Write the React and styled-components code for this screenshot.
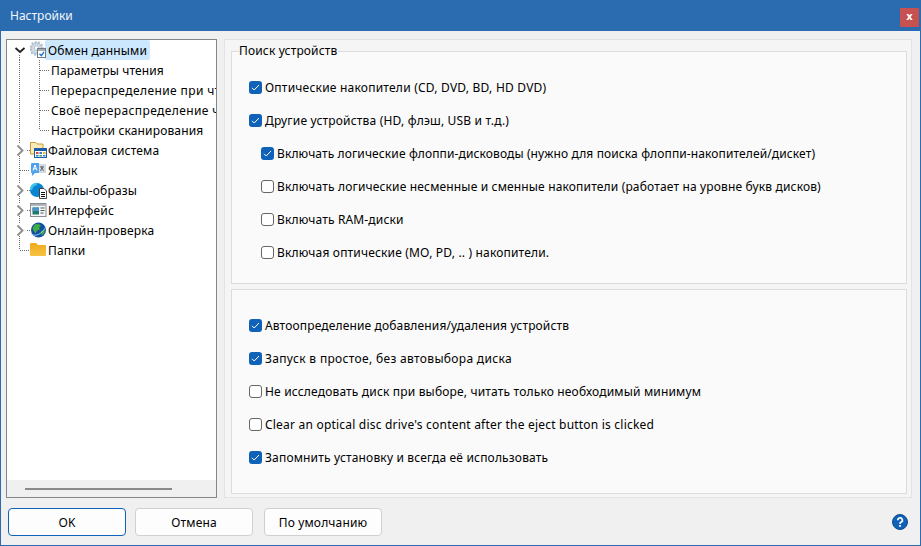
import styled, { createGlobalStyle } from "styled-components";

const GlobalStyle = createGlobalStyle`
  html, body {
    margin: 0;
    padding: 0;
    background: #f0f0f0;
  }
`;

const Window = styled.div`
  width: 921px;
  height: 546px;
  box-sizing: border-box;
  display: flex;
  flex-direction: column;
  background: #f0f0f0;
  border: 1px solid #2b6cb0;
  border-top: 0;
  font-family: "Noto Sans", "Open Sans", sans-serif;
  font-size: 12px;
  color: #000;
  overflow: hidden;
`;

const TitleBar = styled.div`
  height: 31px;
  flex: none;
  background: #2b6cb0;
  display: flex;
  align-items: center;
  justify-content: space-between;
  padding: 0 1px 0 9px;
  color: #f2f6fb;
`;

const CloseButton = styled.div`
  width: 19px;
  height: 19px;
  margin-top: 3px;
  background: #c75050;
  color: #fff;
  display: flex;
  align-items: center;
  justify-content: center;
  font-family: "DejaVu Sans", sans-serif;
  font-weight: 700;
  font-size: 10px;
  line-height: 1;
`;

const Body = styled.div`
  height: 467px;
  flex: none;
  box-sizing: border-box;
  display: flex;
  gap: 7px;
  padding: 8px 8px 0 5px;
`;

const TreePane = styled.div`
  width: 211px;
  height: 459px;
  box-sizing: border-box;
  flex: none;
  display: flex;
  flex-direction: column;
  background: #fff;
  border: 1px solid #82878c;
`;

const TreeList = styled.div`
  flex: 1;
  overflow: hidden;
  padding-left: 3px;
`;

const TreeRow = styled.div`
  height: 20px;
  display: flex;
  align-items: center;
  white-space: nowrap;
`;

const Guide = styled.svg`
  width: 20px;
  height: 20px;
  flex: none;
  display: block;
`;

const NodeIcon = styled.svg`
  width: 18px;
  height: 18px;
  flex: none;
  margin-right: -3px;
  position: relative;
  z-index: 1;
`;

const Label = styled.span`
  height: 20px;
  line-height: 21px;
  padding: 0 3px;
  border-radius: 2px;
  letter-spacing: ${(p) => p.$spacing || "0.15px"};
  background: ${(p) => (p.$selected ? "#cce8ff" : "transparent")};
`;

const ChildLabel = styled(Label)`
  padding-left: 1px;
`;

const HScroll = styled.div`
  height: 17px;
  flex: none;
  background: #f0f0f0;
  display: flex;
  align-items: center;
  padding-left: 18px;
`;

const HThumb = styled.div`
  width: 147px;
  height: 2px;
  background: #8a8a8a;
`;

const SettingsPane = styled.div`
  width: 688px;
  height: 459px;
  box-sizing: border-box;
  flex: none;
  display: flex;
  flex-direction: column;
  gap: 5px;
  background: #f5f5f5;
  border: 1px solid #e3e3e3;
  padding: 3px 4px 3px 6px;
`;

const Group = styled.fieldset`
  margin: 0;
  min-width: 0;
  height: 241px;
  box-sizing: border-box;
  flex: none;
  background: #fafafa;
  border: 1px solid #dcdcdc;
  padding: 0;
  background-clip: padding-box;
`;

const Legend = styled.legend`
  margin-left: 7px;
  padding: 0 1px 0 0;
  line-height: 16px;
  letter-spacing: 0.15px;
`;

const GroupRows = styled.div`
  padding: 12px 0 0 17px;
`;

const PlainGroup = styled.div`
  flex: 1;
  min-height: 0;
  box-sizing: border-box;
  background: #fafafa;
  border: 1px solid #dcdcdc;
  padding: 19px 0 0 17px;
`;

const CheckRow = styled.label`
  height: 33px;
  display: flex;
  align-items: center;
  gap: 3px;
  padding-left: ${(p) => (p.$indent ? "12px" : "0")};
  white-space: nowrap;
  letter-spacing: ${(p) => p.$spacing || "0.15px"};
`;

const Box = styled.span`
  width: 13px;
  height: 13px;
  box-sizing: border-box;
  flex: none;
  border-radius: 3px;
  display: flex;
  align-items: center;
  justify-content: center;
  background: ${(p) => (p.$checked ? "#0f62b8" : "#fff")};
  border: ${(p) => (p.$checked ? "0" : "1px solid #666")};
`;

const Footer = styled.div`
  flex: 1;
  display: flex;
  align-items: flex-start;
  gap: 9px;
  padding: 10px 0 0 7px;
`;

const Button = styled.div`
  width: 118px;
  height: 28px;
  box-sizing: border-box;
  display: flex;
  align-items: center;
  justify-content: center;
  margin-right: ${(p) => p.$gapRight || "0"};
  background: #fdfdfd;
  border-radius: 4px;
  border: 1px solid ${(p) => (p.$primary ? "#0f62b8" : "#d0d0d0")};
  letter-spacing: 0.15px;
`;

const HelpIcon = styled.svg`
  width: 16px;
  height: 16px;
  margin: 6px 12px 0 auto;
`;

const Chevron = ({ open, line }) => (
  <Guide viewBox="0 0 20 20">
    {line === "down" && <path d="M9.5 15V20" stroke="#6a6a6a" strokeDasharray="1 1" />}
    {line === "through" && <path d="M9.5 0V4M9.5 16V20" stroke="#6a6a6a" strokeDasharray="1 1" />}
    {!open && <path d="M17 10.5h3" stroke="#6a6a6a" strokeDasharray="1 1" />}
    {open ? (
      <path d="M5.500 8l4.500 4 4.500-4" fill="none" stroke="#222" strokeWidth="1.800" />
    ) : (
      <path d="M7.500 5.500l5 5-5 5" fill="none" stroke="#8e8e8e" strokeWidth="1.900" />
    )}
  </Guide>
);

// vertical run of the dotted tree line, optional tick to the right
const Connector = ({ tick, end }) => (
  <Guide viewBox="0 0 20 20">
    <path d={end ? "M9.5 0V10" : "M9.5 0V20"} stroke="#6a6a6a" strokeDasharray="1 1" />
    {tick && <path d={`M10 10.5H${tick}`} stroke="#6a6a6a" strokeDasharray="1 1" />}
  </Guide>
);

const GearIcon = () => (
  <NodeIcon viewBox="0 0 18 18">
    <circle cx="6.500" cy="7.500" r="5.500" fill="#cfdbe4" stroke="#a9bac8" strokeWidth="1" />
    <circle cx="6.500" cy="7.500" r="6.500" fill="none" stroke="#aebfcc" strokeWidth="1.800" strokeDasharray="2 1.500" />
    <circle cx="6.500" cy="7" r="2.200" fill="#fff" stroke="#b5c4d0" />
    <rect x="7.500" y="7.500" width="8" height="9" fill="#fff" stroke="#6f7a84" />
    <rect x="8" y="8" width="7" height="2" fill="#a3adb6" />
    <path d="M9.500 12.800l1.800 1.800 2.700-3.600" fill="none" stroke="#1f78d1" strokeWidth="1.400" />
  </NodeIcon>
);

const FolderGridIcon = () => (
  <NodeIcon viewBox="0 0 18 18">
    <path d="M0.500 13V1.500h5l1.500 1.500h6V8H5v5z" fill="#fbeab8" stroke="#c79a3b" />
    <rect x="4.500" y="7.500" width="12" height="9" fill="#fff" stroke="#1c5da8" />
    <rect x="4.500" y="7.500" width="12" height="2.500" fill="#1c5da8" />
    <rect x="6" y="11" width="2.500" height="2" fill="#d9492f" />
    <rect x="9.500" y="11" width="2.500" height="2" fill="#2f7fd0" />
    <rect x="13" y="11" width="2.500" height="2" fill="#f0b429" />
    <rect x="6" y="14" width="2.500" height="1.500" fill="#2f7fd0" />
    <rect x="9.500" y="14" width="2.500" height="1.500" fill="#3aa655" />
    <rect x="13" y="14" width="2.500" height="1.500" fill="#2f7fd0" />
  </NodeIcon>
);

const LanguageIcon = () => (
  <NodeIcon viewBox="0 0 18 18">
    <rect x="8" y="3" width="8" height="9" fill="#d6dbe0" />
    <path d="M10 6h4M12 5v1.500M10.500 10l1.500-3.500 1.500 3.500" fill="none" stroke="#5f6870" strokeWidth="1" />
    <path d="M1 3a1 1 0 0 1 1-1h7v10H5l-3 3v-3a1 1 0 0 1-1-1z" fill="#4fa3ee" />
    <path d="M3 9.500l2-5.500 2 5.500M3.800 7.800h2.400" fill="none" stroke="#fff" strokeWidth="1" />
  </NodeIcon>
);

const ImageFileIcon = () => (
  <NodeIcon viewBox="0 0 18 18">
    <circle cx="7" cy="9" r="7" fill="#0a84d0" />
    <path d="M1 9A6 6 0 0 1 7 3" fill="none" stroke="#3fc4ee" strokeWidth="2.500" />
    <path d="M9.500 7.500h4.500l2.500 2.500v7.500h-7z" fill="#fff" stroke="#333" strokeWidth="0.900" />
    <path d="M11 11.500h4M11 13.500h4M11 15.500h4" stroke="#111" strokeWidth="1" />
  </NodeIcon>
);

const WindowIcon = () => (
  <NodeIcon viewBox="0 0 18 18">
    <rect x="0.500" y="2.500" width="15.500" height="13" fill="#f4f5f6" stroke="#878d93" />
    <rect x="1" y="3" width="14.500" height="1.800" fill="#a6adb3" />
    <rect x="2.500" y="6.500" width="6.500" height="7" fill="#1f7a6c" />
    <rect x="2.500" y="6.500" width="6.500" height="3.500" fill="#4b93c9" />
    <path d="M10.500 7h4M10.500 9.500h4M10.500 12h3" stroke="#50565c" />
  </NodeIcon>
);

const GlobeIcon = () => (
  <NodeIcon viewBox="0 0 18 18">
    <circle cx="8.500" cy="9" r="7.500" fill="#14509f" />
    <path d="M5 3.500c3-1 5 0 6 1.500l-2 1.500 1 2-3 1-1.500 3L3.500 9.500 2.500 7z" fill="#3fae3f" />
    <path d="M11 10l4-1-.5 3-3 2.500z" fill="#3fae3f" />
    <path d="M1.500 13.500c4 2 10 0 14-7" fill="none" stroke="#8fd0f4" strokeWidth="1" />
  </NodeIcon>
);

const FolderIcon = () => (
  <NodeIcon viewBox="0 0 18 18">
    <defs>
      <linearGradient id="folderFill" x1="0" y1="0" x2="0" y2="1">
        <stop offset="0" stopColor="#f2a81c" />
        <stop offset="1" stopColor="#f6c445" />
      </linearGradient>
    </defs>
    <path d="M0 3a1 1 0 0 1 1-1h5l2 2h7a1 1 0 0 1 1 1v9a1 1 0 0 1-1 1H1a1 1 0 0 1-1-1z" fill="url(#folderFill)" />
  </NodeIcon>
);

const CheckBox = ({ checked, indent, spacing, children }) => (
  <CheckRow $indent={indent} $spacing={spacing}>
    <Box $checked={checked}>
      {checked && (
        <svg width="9" height="9" viewBox="0 0 9 9">
          <path d="M1 4.800l2.200 2.200L8 2" fill="none" stroke="#fff" strokeWidth="1" />
        </svg>
      )}
    </Box>
    {children}
  </CheckRow>
);

const subItems = [
  { text: "Параметры чтения", spacing: "0.1px" },
  { text: "Перераспределение при чтении", spacing: "0.4px" },
  { text: "Своё перераспределение чтения", spacing: "0.4px" },
  { text: "Настройки сканирования" },
];

const topItems = [
  { label: "Файловая система", Icon: FolderGridIcon, expand: true },
  { label: "Язык", Icon: LanguageIcon },
  { label: "Файлы-образы", Icon: ImageFileIcon, expand: true },
  { label: "Интерфейс", Icon: WindowIcon, expand: true },
  { label: "Онлайн-проверка", Icon: GlobeIcon, expand: true },
  { label: "Папки", Icon: FolderIcon, end: true },
];

const searchItems = [
  { text: "Оптические накопители (CD, DVD, BD, HD DVD)", checked: true, spacing: "0.22px" },
  { text: "Другие устройства (HD, флэш, USB и т.д.)", checked: true, spacing: "0.18px" },
  { text: "Включать логические флоппи-дисководы (нужно для поиска флоппи-накопителей/дискет)", checked: true, indent: true, spacing: "0.115px" },
  { text: "Включать логические несменные и сменные накопители (работает на уровне букв дисков)", indent: true, spacing: "0.16px" },
  { text: "Включать RAM-диски", indent: true },
  { text: "Включая оптические (MO, PD, .. ) накопители.", indent: true, spacing: "0.17px" },
];

const otherItems = [
  { text: "Автоопределение добавления/удаления устройств", checked: true },
  { text: "Запуск в простое, без автовыбора диска", checked: true, spacing: "0.33px" },
  { text: "Не исследовать диск при выборе, читать только необходимый минимум", spacing: "0.17px" },
  { text: "Clear an optical disc drive's content after the eject button is clicked", spacing: "0.21px" },
  { text: "Запомнить установку и всегда её использовать", checked: true, spacing: "0.17px" },
];

export default function App() {
  return (
    <>
      <GlobalStyle />
      <Window>
        <TitleBar>
          <span>Настройки</span>
          <CloseButton>x</CloseButton>
        </TitleBar>
        <Body>
          <TreePane>
            <TreeList>
              <TreeRow>
                <Chevron open line="down" />
                <GearIcon />
                <Label $selected>Обмен данными</Label>
              </TreeRow>
              {subItems.map((item, i) => (
                <TreeRow key={item.text}>
                  <Connector />
                  <Connector tick="19" end={i === subItems.length - 1} />
                  <ChildLabel $spacing={item.spacing}>{item.text}</ChildLabel>
                </TreeRow>
              ))}
              {topItems.map(({ label, Icon, expand, end }) => (
                <TreeRow key={label}>
                  {expand ? <Chevron line="through" /> : <Connector tick="20" end={end} />}
                  <Icon />
                  <Label>{label}</Label>
                </TreeRow>
              ))}
            </TreeList>
            <HScroll>
              <HThumb />
            </HScroll>
          </TreePane>
          <SettingsPane>
            <Group>
              <Legend>Поиск устройств</Legend>
              <GroupRows>
                {searchItems.map((item) => (
                  <CheckBox key={item.text} checked={item.checked} indent={item.indent} spacing={item.spacing}>
                    {item.text}
                  </CheckBox>
                ))}
              </GroupRows>
            </Group>
            <PlainGroup>
              {otherItems.map((item) => (
                <CheckBox key={item.text} checked={item.checked} spacing={item.spacing}>
                  {item.text}
                </CheckBox>
              ))}
            </PlainGroup>
          </SettingsPane>
        </Body>
        <Footer>
          <Button $primary>OK</Button>
          <Button $gapRight="2px">Отмена</Button>
          <Button>По умолчанию</Button>
          <HelpIcon viewBox="0 0 16 16">
            <circle cx="8" cy="8" r="7.500" fill="#0f62b8" stroke="#0b4a8c" />
            <path d="M5.800 6.200a2.300 2.200 0 1 1 3.400 1.900c-.9.500-1.200 1-1.200 1.900" fill="none" stroke="#fff" strokeWidth="1.700" />
            <rect x="7.100" y="11" width="1.800" height="1.800" fill="#fff" />
          </HelpIcon>
        </Footer>
      </Window>
    </>
  );
}
